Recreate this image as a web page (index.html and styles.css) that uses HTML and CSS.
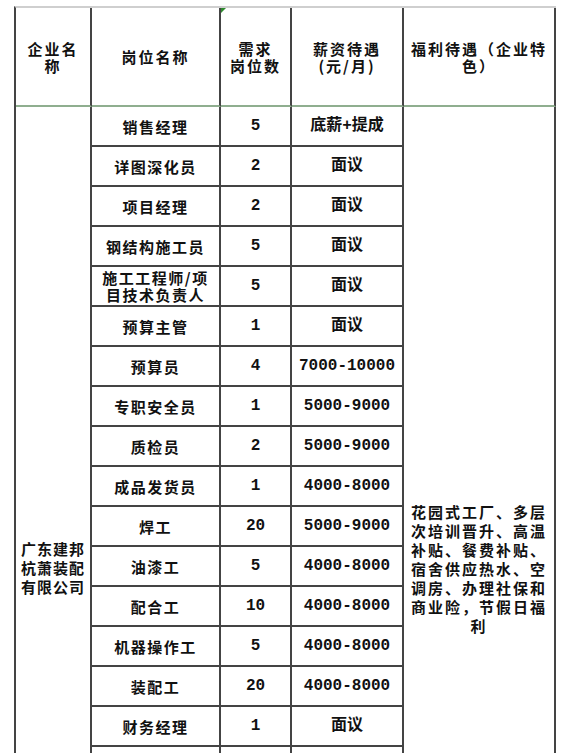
FILE: index.html
```html
<!DOCTYPE html>
<html lang="zh-CN">
<head>
<meta charset="utf-8">
<title>招聘岗位表</title>
<link rel="stylesheet" href="styles.css">
</head>
<body>
<table class="sheet">
  <colgroup>
    <col class="c-company">
    <col class="c-post">
    <col class="c-count">
    <col class="c-pay">
    <col class="c-perks">
  </colgroup>
  <thead>
    <tr>
      <th>企业名<br>称</th>
      <th>岗位名称</th>
      <th class="flag">需求<br>岗位数</th>
      <th>薪资待遇<br>(元/月)</th>
      <th>福利待遇（企业特<br>色）</th>
    </tr>
  </thead>
  <tbody>
    <tr>
      <td class="company" rowspan="17">广东建邦杭萧装配有限公司</td>
      <td>销售经理</td><td class="num">5</td><td class="num">底薪+提成</td>
      <td class="perks" rowspan="17">花园式工厂、多层次培训晋升、高温补贴、餐费补贴、宿舍供应热水、空调房、办理社保和商业险，节假日福利</td>
    </tr>
    <tr><td>详图深化员</td><td class="num">2</td><td class="num">面议</td></tr>
    <tr><td>项目经理</td><td class="num">2</td><td class="num">面议</td></tr>
    <tr><td>钢结构施工员</td><td class="num">5</td><td class="num">面议</td></tr>
    <tr><td>施工工程师/项<br>目技术负责人</td><td class="num">5</td><td class="num">面议</td></tr>
    <tr><td>预算主管</td><td class="num">1</td><td class="num">面议</td></tr>
    <tr><td>预算员</td><td class="num">4</td><td class="num">7000-10000</td></tr>
    <tr><td>专职安全员</td><td class="num">1</td><td class="num">5000-9000</td></tr>
    <tr><td>质检员</td><td class="num">2</td><td class="num">5000-9000</td></tr>
    <tr><td>成品发货员</td><td class="num">1</td><td class="num">4000-8000</td></tr>
    <tr><td>焊工</td><td class="num">20</td><td class="num">5000-9000</td></tr>
    <tr><td>油漆工</td><td class="num">5</td><td class="num">4000-8000</td></tr>
    <tr><td>配合工</td><td class="num">10</td><td class="num">4000-8000</td></tr>
    <tr><td>机器操作工</td><td class="num">5</td><td class="num">4000-8000</td></tr>
    <tr><td>装配工</td><td class="num">20</td><td class="num">4000-8000</td></tr>
    <tr><td>财务经理</td><td class="num">1</td><td class="num">面议</td></tr>
    <tr><td></td><td class="num"></td><td class="num"></td></tr>
  </tbody>
</table>
</body>
</html>
```

FILE: styles.css
```css
html, body {
  margin: 0;
  padding: 0;
  background: #ffffff;
  overflow: hidden;
}

.sheet {
  border-collapse: separate;
  border-spacing: 0;
  table-layout: fixed;
  width: 542px;
  margin: 6px 0 0 14px;
  border-top: 2px solid #cfcfcf;
  border-left: 2px solid #444444;
  font-family: "Noto Sans CJK SC", "Noto Sans", sans-serif;
  font-weight: 700;
  font-size: 15px;
  color: #111111;
}

.c-company { width: 76px; }
.c-post { width: 129px; }
.c-count { width: 71px; }
.c-pay { width: 112px; }
.c-perks { width: 152px; }

.sheet th,
.sheet td {
  padding: 0 3px;
  text-align: center;
  vertical-align: middle;
  border-right: 2px solid #444444;
  border-bottom: 2px solid #444444;
  white-space: normal;
}

.sheet thead tr { height: 99px; }

.sheet th {
  font-weight: 700;
  line-height: 17px;
  letter-spacing: 2px;
  border-bottom-color: #8fae8f;
}

.sheet th.flag { position: relative; }

.sheet th.flag::before {
  content: "";
  position: absolute;
  top: 0;
  left: 0;
  border-top: 5px solid #2f8a2f;
  border-right: 5px solid transparent;
}

.sheet tbody tr { height: 40px; }

.sheet td {
  line-height: 17px;
  letter-spacing: 1.5px;
}

.sheet td.num {
  font-family: "Liberation Mono", "Noto Sans CJK SC", monospace;
  font-size: 16px;
  letter-spacing: 0;
}

.sheet td.company {
  vertical-align: top;
  padding: 432px 4px 0;
  line-height: 19px;
  letter-spacing: 1px;
}

.sheet td.perks {
  vertical-align: top;
  padding: 395px 5px 0;
  line-height: 19px;
  letter-spacing: 2px;
}
```
